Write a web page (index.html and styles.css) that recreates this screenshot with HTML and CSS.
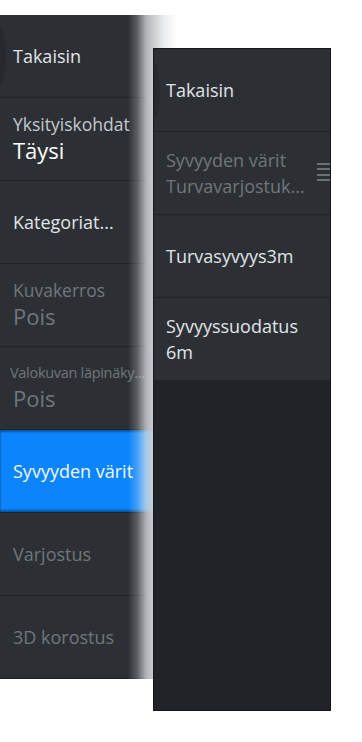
FILE: index.html
```html
<!DOCTYPE html>
<html lang="fi">
<head>
    <meta charset="UTF-8">
    <meta name="viewport" content="width=device-width, initial-scale=1.0">
    <title>Syvyyden värit</title>
    <link rel="stylesheet" href="styles.css">
</head>
<body>
    <div class="stage">
        <!-- Main menu -->
        <div class="menu">
            <div class="row back"><span class="label">Takaisin</span></div>
            <div class="row">
                <span class="label small">Yksityiskohdat</span>
                <span class="value">Täysi</span>
            </div>
            <div class="row"><span class="label">Kategoriat...</span></div>
            <div class="row disabled">
                <span class="label small">Kuvakerros</span>
                <span class="value">Pois</span>
            </div>
            <div class="row disabled">
                <span class="label tiny">Valokuvan läpinäky...</span>
                <span class="value">Pois</span>
            </div>
            <div class="row active"><span class="label">Syvyyden värit</span></div>
            <div class="row disabled"><span class="label">Varjostus</span></div>
            <div class="row disabled"><span class="label">3D korostus</span></div>
        </div>

        <!-- Sub menu for depth colours -->
        <div class="submenu">
            <div class="row back"><span class="label">Takaisin</span></div>
            <div class="row disabled">
                <span class="label">Syvyyden värit</span>
                <span class="label">Turvavarjostuk...</span>
                <svg class="grip" width="14" height="20" viewBox="0 0 14 20">
                    <rect x="0" y="1" width="14" height="2" fill="#6b7075"/>
                    <rect x="0" y="6" width="14" height="2" fill="#6b7075"/>
                    <rect x="0" y="12" width="14" height="2" fill="#6b7075"/>
                    <rect x="0" y="17" width="14" height="2" fill="#6b7075"/>
                </svg>
            </div>
            <div class="row"><span class="label">Turvasyvyys3m</span></div>
            <div class="row">
                <span class="label">Syvyyssuodatus</span>
                <span class="label">6m</span>
            </div>
            <div class="empty"></div>
        </div>
    </div>
</body>
</html>
```

FILE: styles.css
```css
* {
    margin: 0;
    padding: 0;
    box-sizing: border-box;
}

body {
    font-family: 'Open Sans', 'Noto Sans', sans-serif;
    background: #ffffff;
    width: 362px;
    height: 742px;
    overflow: hidden;
}

.stage {
    position: relative;
    padding-top: 15px;
}

.menu {
    position: relative;
    width: 177px;
    background: #2c3035;
    display: flex;
    flex-direction: column;
}

/* fade to white on the right side of the main menu */
.menu::after {
    content: '';
    position: absolute;
    inset: 0;
    background: linear-gradient(to right,
        rgba(255, 255, 255, 0) 128px,
        rgba(255, 255, 255, 0.22) 137px,
        rgba(225, 228, 231, 0.72) 146px,
        rgba(205, 209, 213, 0.95) 152px,
        rgba(235, 236, 237, 1) 164px,
        #ffffff 177px);
    pointer-events: none;
}

.row {
    position: relative;
    height: 83px;
    border-bottom: 1px solid #1f2226;
    display: flex;
    flex-direction: column;
    justify-content: center;
    padding: 0 8px 0 13px;
    overflow: hidden;
}

.label {
    font-size: 18px;
    line-height: 22px;
    color: #e1e4e7;
    white-space: nowrap;
}

.label.small {
    font-size: 17.5px;
    color: #c4c8cc;
    line-height: 22px;
}

.label.tiny {
    font-size: 14.5px;
    letter-spacing: -0.3px;
    margin-left: -3px;
    line-height: 20px;
}

.value {
    font-size: 22px;
    line-height: 30px;
    color: #ffffff;
}

.row.disabled .label,
.row.disabled .value {
    color: #71767b;
}

.row.active {
    background: #0c84fb;
    box-shadow: inset 0 2px 2px rgba(0, 0, 0, 0.35), inset 0 -2px 2px rgba(0, 0, 0, 0.35);
}

.row.active .label {
    color: #f4f8ff;
}

/* back button crescent on the left edge */
.row.back::before {
    content: '';
    position: absolute;
    left: -38px;
    top: -4px;
    width: 44px;
    height: 91px;
    border-radius: 50%;
    background: rgba(16, 18, 21, 0.22);
}

.submenu {
    position: absolute;
    left: 153px;
    top: 48px;
    width: 178px;
    height: 663px;
    background: #202327;
    border: 1px solid #15171a;
    display: flex;
    flex-direction: column;
}

.submenu .row {
    background: #2c3035;
    padding-left: 12px;
}

.submenu .row .label {
    line-height: 26px;
}

.grip {
    position: absolute;
    right: -1px;
    top: 30px;
}

.empty {
    flex: 1;
    background: #202327;
}
```
